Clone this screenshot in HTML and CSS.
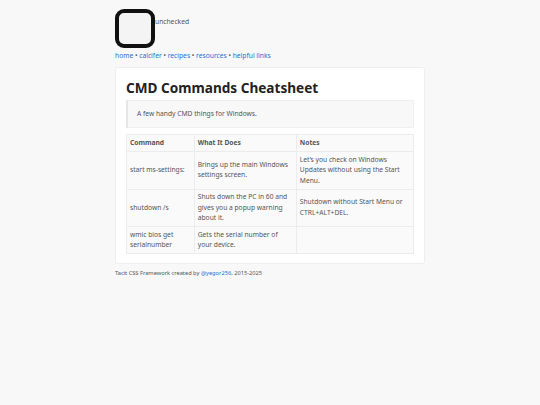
FILE: index.html
```html
<!DOCTYPE html>
<html lang="en">
<head>
<meta charset="utf-8">
<title>CMD Commands Cheatsheet</title>
<link rel="stylesheet" href="styles.css">
</head>
<body>
<div class="page">
  <header class="top">
    <div class="check-row">
      <span class="checkbox" role="img" aria-label="unchecked"></span>
      <span class="check-label">unchecked</span>
    </div>
    <nav class="nav">
      <a href="#">home</a> • <a href="#">calcifer</a> • <a href="#">recipes</a> • <a href="#">resources</a> • <a href="#">helpful links</a>
    </nav>
  </header>
  <main class="card">
    <h1 class="title">CMD Commands Cheatsheet</h1>
    <blockquote class="quote">A few handy CMD things for Windows.</blockquote>
    <table class="cmd-table">
      <colgroup>
        <col class="c1"><col class="c2"><col class="c3">
      </colgroup>
      <thead>
        <tr><th>Command</th><th>What It Does</th><th>Notes</th></tr>
      </thead>
      <tbody>
        <tr>
          <td>start ms-settings:</td>
          <td>Brings up the main Windows settings screen.</td>
          <td>Let’s you check on Windows Updates without using the Start Menu.</td>
        </tr>
        <tr>
          <td>shutdown /s</td>
          <td>Shuts down the PC in 60 and gives you a popup warning about it.</td>
          <td>Shutdown without Start Menu or CTRL+ALT+DEL.</td>
        </tr>
        <tr>
          <td>wmic bios get serialnumber</td>
          <td>Gets the serial number of your device.</td>
          <td></td>
        </tr>
      </tbody>
    </table>
  </main>
  <footer class="foot">
    Tacit CSS Framework created by <a href="#">@yegor256</a>, 2015-2025
  </footer>
</div>
</body>
</html>
```

FILE: styles.css
```css
html, body {
  margin: 0;
  padding: 0;
}
body {
  background: #f8f8f8;
  font-family: "Noto Sans", "Open Sans", sans-serif;
  color: #555;
  font-size: 6.7px;
  line-height: 10.5px;
}
.page {
  width: 310px;
  margin: 0 auto;
  padding-top: 9px;
}
.check-row {
  display: flex;
  align-items: flex-start;
}
.checkbox {
  box-sizing: border-box;
  width: 40px;
  height: 39px;
  border: 4px solid #111;
  border-radius: 9px;
  background: #f4f4f4;
}
.check-label {
  padding-top: 8px;
  color: #555;
}
.nav {
  margin-top: 3px;
  color: #555;
}
a {
  color: #2a6fd6;
  text-decoration: none;
}
.card {
  display: block;
  margin-top: 5px;
  background: #fff;
  border: 1px solid #eee;
  border-radius: 3px;
  padding: 10px 10px 9px;
}
.title {
  margin: 1px 0 0 0;
  font-size: 13.6px;
  line-height: 18px;
  font-weight: 700;
  color: #222;
}
.quote {
  margin: 3.5px 0 0 0;
  background: #f8f8f8;
  border: 1px solid #f0f0f0;
  border-left: 2px solid #e6e6e6;
  padding: 7.5px 9px;
  color: #555;
}
.cmd-table {
  margin-top: 6px;
  width: 100%;
  border-collapse: collapse;
  background: #fafafa;
}
.c1 { width: 68px; }
.c2 { width: 103px; }
.c3 { width: 118px; }
.cmd-table th,
.cmd-table td {
  border: 1px solid #ececec;
  text-align: left;
  vertical-align: middle;
  padding: 2.5px 3px;
}
.cmd-table th {
  font-weight: 700;
  padding-top: 3px;
  padding-bottom: 3px;
  color: #555;
}
.foot {
  margin-top: 5px;
  font-size: 5.7px;
  line-height: 8px;
  color: #555;
}
```
